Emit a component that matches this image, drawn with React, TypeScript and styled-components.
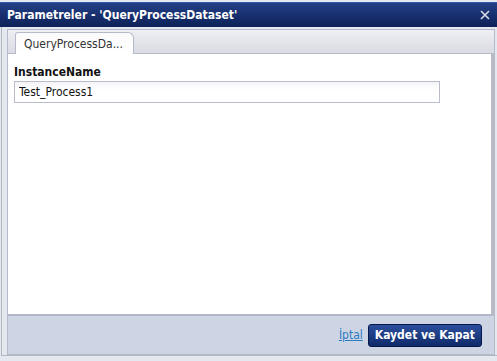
import * as React from 'react';
import styled, { createGlobalStyle } from 'styled-components';

const Global = createGlobalStyle`
  html, body {
    margin: 0;
    padding: 0;
    background: #e4e8ef;
  }
  body {
    font-family: 'DejaVu Sans Condensed', 'DejaVu Sans', Tahoma, sans-serif;
  }
`;

const Window = styled.div`
  width: 497px;
  height: 361px;
  box-sizing: border-box;
  display: flex;
  flex-direction: column;
  background: #e4e8ef;
  padding-top: 2px;
`;

const TitleBar = styled.div`
  height: 24px;
  flex: none;
  display: flex;
  align-items: center;
  justify-content: space-between;
  padding: 0 6px 0 7px;
  background: linear-gradient(#233f86, #0c2157);
  border-top: 1px solid #3a5aa8;
`;

const Title = styled.span`
  color: #fff;
  font-size: 12px;
  font-weight: bold;
`;

const Close = styled.button`
  width: 12px;
  height: 12px;
  padding: 0;
  border: 0;
  background: none;
  display: flex;
  align-items: center;
  justify-content: center;
  cursor: pointer;
`;

const Frame = styled.div`
  flex: 1;
  display: flex;
  flex-direction: column;
  margin: 0 0 5px 1px;
  border-left: 1px solid #b4b7c2;
  border-bottom: 1px solid #b4b7c2;
  padding: 2px 2px 0 5px;
`;

const Panel = styled.div`
  flex: 1;
  display: flex;
  flex-direction: column;
  border: 1px solid #b5bacb;
  border-top: 0;
  background: #cdd5e5;
`;

const TabStrip = styled.div`
  height: 23px;
  display: flex;
  align-items: flex-end;
  padding-left: 7px;
  background: linear-gradient(#eeeff3, #dadbe3);
  border-top: 1px solid #b5bacb;
  border-bottom: 1px solid #b5bacb;
`;

const Tab = styled.div`
  height: 22px;
  box-sizing: border-box;
  padding: 0 10px 0 8px;
  margin-bottom: -1px;
  display: flex;
  align-items: center;
  background: linear-gradient(#fbfbfc, #ffffff);
  border: 1px solid #b5bacb;
  border-bottom: 0;
  border-radius: 3px 6px 0 0;
  font-size: 12px;
  color: #333;
`;

const Content = styled.div`
  flex: 1;
  background: #fff;
  margin-right: 3px;
  padding: 11px 6px;
  border-bottom: 2px solid #b2b6c8;
  box-shadow: 3px 0 0 #b8bac6;
`;

const Label = styled.div`
  font-weight: bold;
  font-size: 12px;
  color: #111;
  margin-bottom: 2px;
`;

const Input = styled.input`
  width: 426px;
  height: 22px;
  box-sizing: border-box;
  border: 1px solid #b9bccb;
  background: linear-gradient(#f4f4f8, #ffffff 40%);
  padding: 0 4px;
  font-family: inherit;
  font-size: 12px;
  color: #111;
  outline: none;
`;

const Footer = styled.div`
  height: 38px;
  flex: none;
  display: flex;
  align-items: center;
  justify-content: flex-end;
  gap: 5px;
  padding-right: 12px;
`;

const CancelLink = styled.a`
  font-size: 12px;
  color: #2b7bbf;
  text-decoration: underline;
  cursor: pointer;
`;

const SaveButton = styled.button`
  height: 23px;
  padding: 0 6px;
  border: 1px solid #06174a;
  border-radius: 3px;
  background: linear-gradient(#2c4f9c, #0f2a6a);
  color: #fff;
  font-family: inherit;
  font-weight: bold;
  font-size: 12px;
  cursor: pointer;
`;

export default function App() {
  const [value, setValue] = React.useState('Test_Process1');

  return (
    <>
      <Global />
      <Window>
        <TitleBar>
          <Title>Parametreler - 'QueryProcessDataset'</Title>
          <Close aria-label="Kapat">
            <svg width="10" height="10" viewBox="0 0 10 10">
              <path d="M1 1L9 9M9 1L1 9" stroke="#d8dce6" strokeWidth="1.6" />
            </svg>
          </Close>
        </TitleBar>
        <Frame>
          <Panel>
            <TabStrip>
              <Tab>QueryProcessDa...</Tab>
            </TabStrip>
            <Content>
              <Label>InstanceName</Label>
              <Input value={value} onChange={e => setValue(e.target.value)} />
            </Content>
            <Footer>
              <CancelLink>İptal</CancelLink>
              <SaveButton>Kaydet ve Kapat</SaveButton>
            </Footer>
          </Panel>
        </Frame>
      </Window>
    </>
  );
}
